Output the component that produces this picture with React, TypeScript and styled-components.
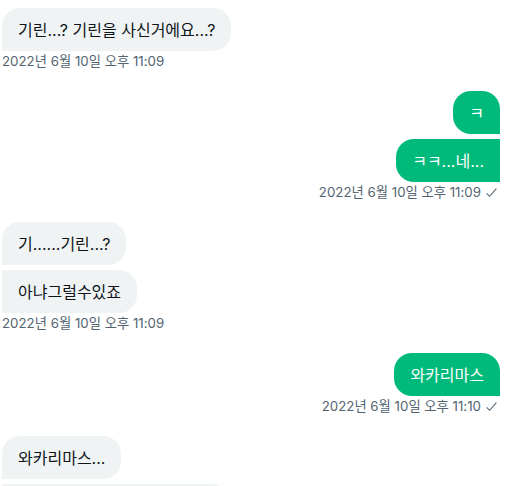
import React from 'react';
import styled, { createGlobalStyle, css } from 'styled-components';

const GlobalStyle = createGlobalStyle`
	html, body {
		margin: 0;
		padding: 0;
		background: #ffffff;
		overflow: hidden;
	}
	body {
		font-family: Inter, 'Noto Sans CJK KR', sans-serif;
		color: #0f1419;
	}
`;

const Thread = styled.div`
	display: flex;
	flex-direction: column;
	gap: 22px;
	padding: 8px 8px 0 2px;
	width: 508px;
	height: 486px;
	box-sizing: border-box;
	overflow: hidden;
`;

const Group = styled.div<{ mine: boolean }>`
	display: flex;
	flex-direction: column;
	align-items: ${(p) => (p.mine ? 'flex-end' : 'flex-start')};
	gap: 5px;
`;

type Pos = 'single' | 'first' | 'middle' | 'last';

const corners = (mine: boolean, pos: Pos) => {
	const r = '18px';
	const top = pos === 'single' || pos === 'first' ? r : '0';
	return mine
		? css`border-radius: ${r} ${top} 0 ${r};`
		: css`border-radius: ${top} ${r} ${r} 0;`;
};

const Bubble = styled.div<{ mine: boolean; pos: Pos }>`
	padding: 12px 16px 11px;
	font-size: 16px;
	line-height: 20px;
	background: ${(p) => (p.mine ? '#00ba7c' : '#eff3f4')};
	color: ${(p) => (p.mine ? '#ffffff' : '#0f1419')};
	${(p) => corners(p.mine, p.pos)}
	white-space: nowrap;
`;

const Stamp = styled.div`
	display: flex;
	align-items: center;
	gap: 4px;
	margin-top: -3px;
	font-size: 13.3px;
	line-height: 16px;
	color: #536471;
`;

const Check = styled.svg`
	width: 13px;
	height: 13px;
	margin-right: 2px;
`;

type Msg = { mine: boolean; texts: string[]; time?: string };

const messages: Msg[] = [
	{ mine: false, texts: ['기린...? 기린을 사신거에요...?'], time: '2022년 6월 10일 오후 11:09' },
	{ mine: true, texts: ['ㅋ', 'ㅋㅋ...네...'], time: '2022년 6월 10일 오후 11:09' },
	{ mine: false, texts: ['기......기린...?', '아냐그럴수있죠'], time: '2022년 6월 10일 오후 11:09' },
	{ mine: true, texts: ['와카리마스'], time: '2022년 6월 10일 오후 11:10' },
	{ mine: false, texts: ['와카리마스...', '기린은 어디서 사신 거예요...?'] },
];

const posOf = (i: number, n: number): Pos =>
	n === 1 ? 'single' : i === 0 ? 'first' : i === n - 1 ? 'last' : 'middle';

const App = () => {
	return (
		<>
			<GlobalStyle />
			<Thread>
				{messages.map((m, gi) => (
					<Group key={gi} mine={m.mine}>
						{m.texts.map((t, i) => (
							<Bubble key={i} mine={m.mine} pos={posOf(i, m.texts.length)}>
								{t}
							</Bubble>
						))}
						{m.time && (
							<Stamp>
								<span>{m.time}</span>
								{m.mine && (
									<Check viewBox="0 0 24 24" fill="none" stroke="#536471" strokeWidth="2">
										<path d="M3 13.5l5.5 5.5L21 5" />
									</Check>
								)}
							</Stamp>
						)}
					</Group>
				))}
			</Thread>
		</>
	);
};

export default App;
